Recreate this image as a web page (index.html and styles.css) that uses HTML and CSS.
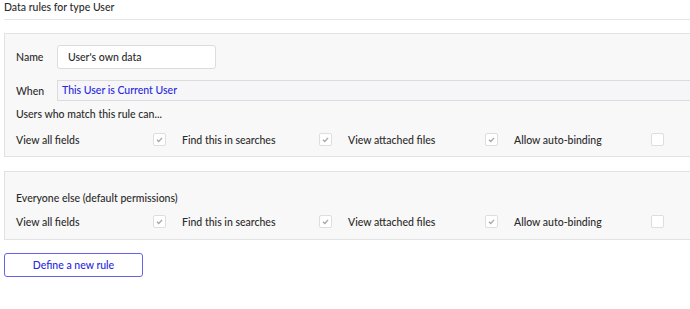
FILE: index.html
```html
<!DOCTYPE html>
<html lang="en">
<head>
  <meta charset="UTF-8">
  <title>Data rules</title>
  <link rel="stylesheet" href="styles.css">
</head>
<body>
  <div class="page">
    <!-- Header -->
    <div class="section-title">Data rules for type User</div>

    <!-- Rule: User's own data -->
    <div class="rule-panel">
      <div class="field-row">
        <span class="field-label">Name</span>
        <div class="text-input">User's own data</div>
      </div>
      <div class="field-row when-row">
        <span class="field-label">When</span>
        <div class="expression-input">This User is Current User</div>
      </div>
      <p class="panel-caption">Users who match this rule can...</p>
      <div class="perm-row">
        <div class="perm"><span>View all fields</span><span class="checkbox checked"><svg viewBox="0 0 12 12"><polyline points="3.2,6.3 5.2,8.1 8.8,4.2"/></svg></span></div>
        <div class="perm"><span>Find this in searches</span><span class="checkbox checked"><svg viewBox="0 0 12 12"><polyline points="3.2,6.3 5.2,8.1 8.8,4.2"/></svg></span></div>
        <div class="perm"><span>View attached files</span><span class="checkbox checked"><svg viewBox="0 0 12 12"><polyline points="3.2,6.3 5.2,8.1 8.8,4.2"/></svg></span></div>
        <div class="perm"><span>Allow auto-binding</span><span class="checkbox"></span></div>
      </div>
    </div>

    <!-- Default permissions -->
    <div class="rule-panel default-panel">
      <p class="panel-caption">Everyone else (default permissions)</p>
      <div class="perm-row">
        <div class="perm"><span>View all fields</span><span class="checkbox checked"><svg viewBox="0 0 12 12"><polyline points="3.2,6.3 5.2,8.1 8.8,4.2"/></svg></span></div>
        <div class="perm"><span>Find this in searches</span><span class="checkbox checked"><svg viewBox="0 0 12 12"><polyline points="3.2,6.3 5.2,8.1 8.8,4.2"/></svg></span></div>
        <div class="perm"><span>View attached files</span><span class="checkbox checked"><svg viewBox="0 0 12 12"><polyline points="3.2,6.3 5.2,8.1 8.8,4.2"/></svg></span></div>
        <div class="perm"><span>Allow auto-binding</span><span class="checkbox"></span></div>
      </div>
    </div>

    <button class="define-button">Define a new rule</button>
  </div>
</body>
</html>
```

FILE: styles.css
```css
:root {
  --text: #2b2b2b;
  --blue: #2727e0;
  --border: #e2e2e2;
  --panel-bg: #f8f8f8;
}

* {
  margin: 0;
  padding: 0;
  box-sizing: border-box;
}

body {
  font-family: 'Lato', sans-serif;
  font-size: 10.5px;
  font-weight: 500;
  color: var(--text);
  background: white;
  overflow: hidden;
}

.page {
  width: 720px;
  padding-left: 4px;
}

/* Header */
.section-title {
  line-height: 15px;
  padding-bottom: 4px;
  border-bottom: 1px solid #e6e6e6;
}

/* Panels */
.rule-panel {
  margin-top: 13px;
  background: var(--panel-bg);
  border: 1px solid var(--border);
  padding: 11px 0 8px 11px;
}

.default-panel {
  margin-top: 14px;
  padding-top: 18px;
  padding-bottom: 9px;
}

.field-row {
  display: flex;
  align-items: center;
}

.when-row {
  margin-top: 11px;
}

.field-label {
  width: 41px;
  flex-shrink: 0;
}

.text-input {
  width: 159px;
  height: 24px;
  line-height: 22px;
  padding-left: 10px;
  background: white;
  border: 1px solid #dcdcdc;
  border-radius: 3px;
}

.expression-input {
  flex: 1;
  height: 21px;
  line-height: 19px;
  padding-left: 4px;
  color: var(--blue);
  background: #f6f6f8;
  border: 1px solid #dcdcdc;
  border-right: none;
}

.panel-caption {
  margin-top: 5px;
  line-height: 17px;
}

.default-panel .panel-caption {
  margin-top: 0;
}

.perm-row {
  display: flex;
  margin-top: 8px;
}

.default-panel .perm-row {
  margin-top: 6px;
}

.perm {
  width: 166px;
  flex-shrink: 0;
  display: flex;
  align-items: center;
  height: 17px;
}

.perm span:first-child {
  width: 137px;
}

.checkbox {
  width: 13px;
  height: 13px;
  background: white;
  border: 1px solid #dedede;
  border-radius: 2px;
  display: flex;
  align-items: center;
  justify-content: center;
}

.checkbox svg {
  width: 11px;
  height: 11px;
  fill: none;
  stroke: #a8a8a8;
  stroke-width: 1.5;
}

/* Button */
.define-button {
  margin-top: 13px;
  width: 139px;
  height: 24px;
  font-family: inherit;
  font-size: 10.5px;
  font-weight: 500;
  color: var(--blue);
  background: white;
  border: 1px solid #6464ea;
  border-radius: 3px;
  cursor: pointer;
}
```
